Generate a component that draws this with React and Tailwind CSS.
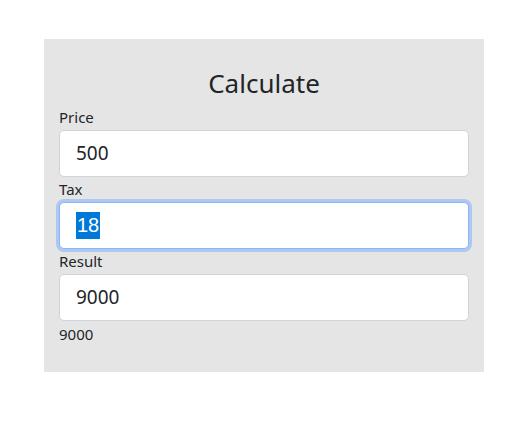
import React from 'react';

function Field({ label, value, focused }) {
    return (
        <div>
            <label className="block text-[15px] leading-[25px] text-[#212529]">{label}</label>
            {focused ? (
                <div className="h-[47px] flex items-center px-4 bg-white border border-[#86b7fe] rounded-[5px] shadow-[0_0_0_3px_#b0c8ef] text-[19px] text-[#212529]">
                    <span className="bg-[#0078d7] text-white text-[20px] leading-[27px] px-[1px] font-['Liberation_Sans',sans-serif]">{value}</span>
                </div>
            ) : (
                <div className="h-[47px] flex items-center px-4 bg-white border border-[#ced4da] rounded-[5px] text-[19px] text-[#212529]">
                    {value}
                </div>
            )}
        </div>
    );
}

export default function App() {
    return (
        <div className="w-[528px] h-[442px] bg-white pt-[39px] pl-[44px] font-['Noto_Sans',sans-serif]">
            <div className="w-[440px] h-[333px] bg-[#e5e5e5] px-[15px]">
                <h1 className="pt-[25px] pb-[3px] text-center text-[26px] leading-[38px] text-[#212529]">Calculate</h1>
                <Field label="Price" value="500" />
                <Field label="Tax" value="18" focused />
                <Field label="Result" value="9000" />
                <p className="mt-[1px] text-[15px] leading-[24px] text-[#212529]">9000</p>
            </div>
        </div>
    );
}
